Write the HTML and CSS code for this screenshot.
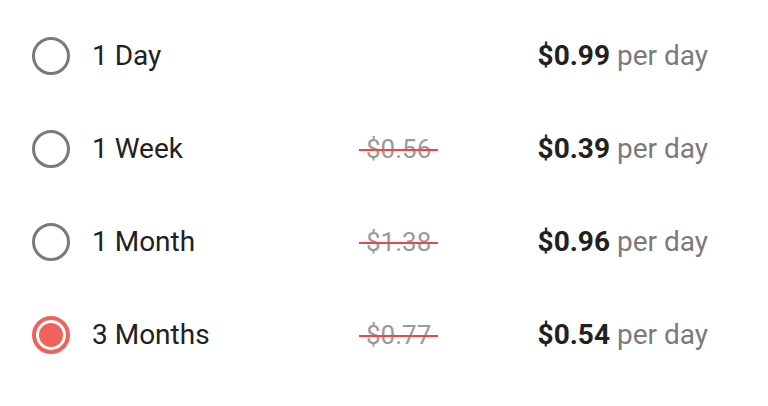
FILE: index.html
```html
<!DOCTYPE html>
<html>
<head>
    <title>Plans</title>
    <link rel="stylesheet" href="styles.css">
</head>
<body>
    <div class="plans">
        <label class="plan">
            <span class="radio"></span>
            <span class="name">1 Day</span>
            <span class="old"></span>
            <span class="price"><b>$0.99</b> per day</span>
        </label>
        <label class="plan">
            <span class="radio"></span>
            <span class="name">1 Week</span>
            <span class="old"><s>$0.56</s></span>
            <span class="price"><b>$0.39</b> per day</span>
        </label>
        <label class="plan">
            <span class="radio"></span>
            <span class="name">1 Month</span>
            <span class="old"><s>$1.38</s></span>
            <span class="price"><b>$0.96</b> per day</span>
        </label>
        <label class="plan selected">
            <span class="radio"></span>
            <span class="name">3 Months</span>
            <span class="old"><s>$0.77</s></span>
            <span class="price"><b>$0.54</b> per day</span>
        </label>
    </div>
</body>
</html>
```

FILE: styles.css
```css
body {
    margin: 0;
    background: #fff;
    font-family: Roboto, "Noto Sans", sans-serif;
}
.plans {
    padding: 9px 60px 0 32px;
}
.plan {
    display: grid;
    grid-template-columns: 60px 1fr 80px 269px;
    align-items: center;
    height: 93px;
}
.radio {
    width: 38px;
    height: 38px;
    box-sizing: border-box;
    border: 3.5px solid #7a7a7a;
    border-radius: 50%;
}
.selected .radio {
    border: 4px solid #f0625c;
    padding: 3px;
    background: #f0625c content-box;
}
.name {
    font-size: 28px;
    color: #212121;
}
.old s {
    position: relative;
    display: inline-block;
    text-decoration: none;
    font-size: 26px;
    color: #9a9a9a;
    padding: 0 7px;
}
.old s::after {
    content: "";
    position: absolute;
    left: 0;
    right: 0;
    top: 52%;
    height: 2px;
    background: #f0473d;
}
.price {
    text-align: right;
    font-size: 28px;
    color: #7a7a7a;
}
.price b {
    font-weight: 700;
    color: #212121;
}
```
